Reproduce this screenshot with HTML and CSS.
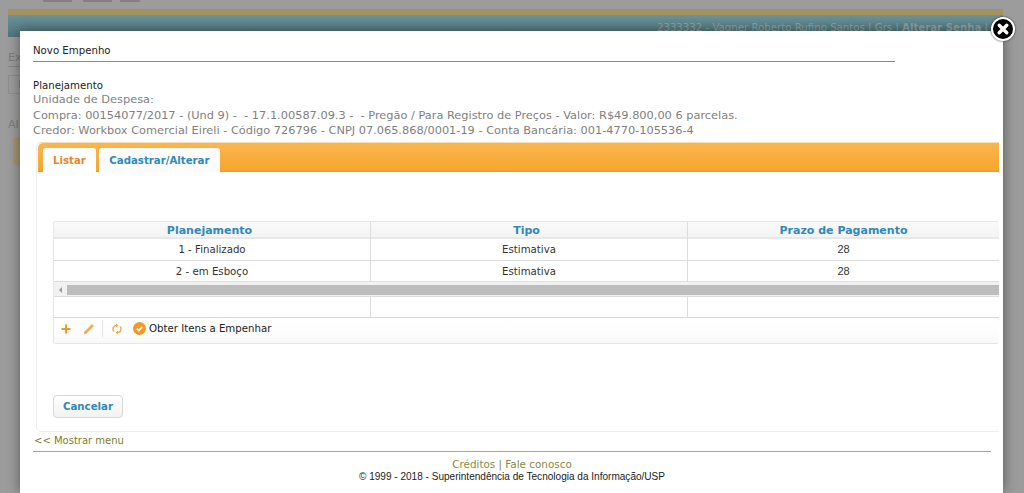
FILE: index.html
```html
<!DOCTYPE html>
<html lang="pt-BR">
<head>
  <meta charset="utf-8">
  <title>Novo Empenho</title>
  <link rel="stylesheet" href="styles.css">
</head>
<body>
  <!-- pagina atras do modal -->
  <div class="page">
    <div class="topButtons"><span class="b1"></span><span class="b2"></span><span class="b3"></span></div>
    <div class="headerBar">2333332 - Vagner Roberto Rufino Santos | Grs | <b>Alterar Senha</b> |</div>
    <div class="pageTitle">Ex</div>
    <div class="pageInput">N</div>
    <div class="pageLabel">Al</div>
    <div class="pageCard"></div>
  </div>

  <div class="modal">
    <div class="closeBtn">
      <svg width="26" height="26" viewBox="0 0 26 26">
        <circle cx="13" cy="13" r="11" fill="#000" stroke="#fff" stroke-width="2"/>
        <path d="M9.2 9.2 L16.8 16.8 M16.8 9.2 L9.2 16.8" stroke="#fff" stroke-width="3.4" stroke-linecap="round"/>
      </svg>
    </div>
    <h1 class="modalTitle">Novo Empenho</h1>
    <div class="info">
      <div class="infoHead">Planejamento</div>
      <div>Unidade de Despesa:</div>
      <div>Compra: 00154077/2017 - (Und 9) - &nbsp;- 17.1.00587.09.3 - &nbsp;- Pregão / Para Registro de Preços - Valor: R$49.800,00 6 parcelas.</div>
      <div>Credor: Workbox Comercial Eireli - Código 726796 - CNPJ 07.065.868/0001-19 - Conta Bancária: 001-4770-105536-4</div>
    </div>

    <div class="tabs">
      <div class="tabBar">
        <div class="tab on">Listar</div>
        <div class="tab">Cadastrar/Alterar</div>
      </div>
      <div class="tabBody">
        <div class="grid">
          <div class="row head"><div class="shift">Planejamento</div><div class="shift">Tipo</div><div>Prazo de Pagamento</div></div>
          <div class="row first"><div>1 - Finalizado</div><div>Estimativa</div><div class="num">28</div></div>
          <div class="row"><div>2 - em Esboço</div><div>Estimativa</div><div class="num">28</div></div>
          <div class="scroll"><span class="arrow"></span><span class="thumb"></span></div>
          <div class="row empty"><div></div><div></div><div></div></div>
          <div class="tools">
            <svg class="ico" width="12" height="12" viewBox="0 0 12 12"><path d="M6 1.5 V10.5 M1.5 6 H10.5" stroke="#ef9a2a" stroke-width="2"/></svg>
            <svg class="ico pen" width="12" height="12" viewBox="0 0 12 12"><path d="M2.5 9.5 L10 2" stroke="#efae50" stroke-width="2.6"/><path d="M1 11 L1.8 8 L4 10.2 Z" fill="#ef9a2a"/></svg>
            <span class="sep"></span>
            <svg class="ico" width="12" height="12" viewBox="0 0 12 12"><path d="M3 8.5 A3.6 3.6 0 0 1 5.5 2.4 M9 3.5 A3.6 3.6 0 0 1 6.5 9.6" fill="none" stroke="#f0a94a" stroke-width="1.4"/><path d="M5 0.5 L7.5 2.4 L5 4.4 Z M7 7.6 L4.5 9.6 L7 11.5 Z" fill="#f0a94a"/></svg>
            <svg class="check" width="13" height="13" viewBox="0 0 13 13"><circle cx="6.5" cy="6.5" r="6.5" fill="#ef9a2a"/><path d="M3.8 6.6 L5.8 8.6 L9.3 4.9" fill="none" stroke="#fff" stroke-width="1.7"/></svg>
            <span>Obter Itens a Empenhar</span>
          </div>
        </div>
        <div class="button">Cancelar</div>
      </div>
    </div>

    <div class="showMenu">&lt;&lt; Mostrar menu</div>
    <div class="footer">
      <div class="links">Créditos | Fale conosco</div>
      <div class="copy">© 1999 - 2018 - Superintendência de Tecnologia da Informação/USP</div>
    </div>
  </div>
</body>
</html>
```

FILE: styles.css
```css
html, body {margin:0;height:100%;}
body {background-color:#9c9c9c;font-family:"DejaVu Sans",Verdana,sans-serif;font-size:10.2px;color:#333;overflow:hidden;}

/* pagina escurecida */
.page {padding:0 21px 0 8px;color:#7d7d7d;}
.topButtons {display:flex;height:9px;padding-left:35px;}
.topButtons span {height:2px;background-color:#8a7f7f;}
.topButtons .b1 {width:29px;}
.topButtons .b2 {width:29px;margin-left:11px;}
.topButtons .b3 {width:20px;margin-left:8px;}
.headerBar {height:16px;padding-top:6px;padding-right:15px;border-top:6px solid #a5935f;text-align:right;font-size:10.2px;line-height:13px;color:#8ea4a7;background:linear-gradient(#6b9299,#4f747d);white-space:nowrap;}
.pageTitle {margin-top:14px;padding-bottom:2px;border-bottom:1px solid #858585;font-size:11px;line-height:13px;}
.pageInput {margin-top:8px;height:17px;line-height:17px;padding-left:9px;border:1px solid #8e8e8e;}
.pageLabel {margin-top:24px;font-size:11px;line-height:14px;}
.pageCard {margin:5px 0 0 5px;height:28px;background-color:#a5966f;border-radius:4px;}

/* modal */
.modal {position:absolute;left:20px;top:31px;width:983px;height:462px;box-sizing:border-box;padding:13px 4px 0 13px;background-color:#fff;box-shadow:0 0 12px rgba(0,0,0,.45);}
.closeBtn {position:absolute;top:-15px;right:-13px;width:26px;height:26px;filter:drop-shadow(0 0 1px #333);}
.modalTitle {margin:0 104px 0 0;height:17px;font-size:10.2px;font-weight:normal;line-height:13px;color:#222;border-bottom:1px solid #8c8c8c;}

.info {margin-top:17px;font-size:11.35px;line-height:15.5px;color:#7f7f7f;}
.info .infoHead {font-size:10.2px;color:#222;line-height:13px;}

/* abas */
.tabs {margin:3.5px 0 0 3px;padding-left:1px;border:1px solid #eee;border-top:1px solid #f3dfb5;border-right:0;border-radius:5px 0 0 5px;}
.tabBar {display:flex;height:29px;padding:5px 0 0 5px;box-sizing:border-box;gap:3px;background:linear-gradient(#f9b650,#f6a62e);border-bottom:1px solid #e69a25;border-radius:5px 0 0 0;}
.tab {height:24px;padding:0 10.5px;line-height:25px;font-weight:bold;color:#3089b8;background-color:#fbfbfb;border-radius:3px 3px 0 0;}
.tab.on {height:25px;padding:0 10px;color:#e8872a;background-color:#fff;}
.tabBody {height:259px;box-sizing:border-box;padding:49px 0 0 15px;}

/* grade */
.grid {border:1px solid #e6e6e6;border-right:0;border-radius:3px;height:123px;box-sizing:border-box;}
.row {display:grid;grid-template-columns:316px 317px 1fr;box-sizing:border-box;height:21px;line-height:21px;text-align:center;border-bottom:1px solid #ddd;color:#333;}
.row.first {height:22px;}
.row div + div {border-left:1px solid #ddd;}
.row .num {font-family:"Liberation Sans",Arial,sans-serif;font-size:11px;}
.row.head {height:17px;line-height:18px;font-size:11px;font-weight:bold;color:#3089b8;background:linear-gradient(#fafafa,#f3f3f3);border-bottom:2px solid #e8e8e8;}
.row.head .shift {padding-right:5px;}
.row.empty {border-bottom:1px solid #d8d8d8;}
.scroll {display:flex;height:15px;align-items:stretch;background-color:#f1f1f1;padding:3px 0 1px 0;box-sizing:border-box;border-bottom:1px solid #ddd;}
.scroll .arrow {width:13px;position:relative;}
.scroll .arrow:after {content:"";position:absolute;left:5px;top:2px;border:3px solid transparent;border-right:3px solid #999;border-left:0;}
.scroll .thumb {flex:1;background-color:#bdbdbd;}
.tools {display:flex;align-items:center;height:25px;box-sizing:border-box;padding:0 0 4px 6px;background:linear-gradient(#fff,#fdfdfd 60%,#f8f8f8);color:#222;}
.tools .ico {flex:none;}
.tools .pen {margin-left:11px;}
.tools .sep {width:1px;height:17px;margin:0 8px 0 7px;background-color:#e4e4e4;}
.tools .check {margin:0 3px 0 10px;flex:none;}

.button {width:68px;height:21px;margin-top:51px;line-height:21px;text-align:center;font-weight:bold;color:#3089b8;background:linear-gradient(#fff,#f2f2f2);border:1px solid #d8d8d8;border-radius:4px;}

/* rodape */
.showMenu {height:19px;line-height:17px;padding-left:1px;font-size:10px;color:#7d7d2f;border-bottom:1px solid #a5a5a5;margin-right:8px;}
.footer {text-align:center;margin-right:8px;}
.links {margin-top:6px;line-height:13px;font-size:10.4px;color:#8a8a45;}
.copy {font-family:"Liberation Sans",Arial,sans-serif;font-size:10.05px;line-height:11px;color:#222;}
```
